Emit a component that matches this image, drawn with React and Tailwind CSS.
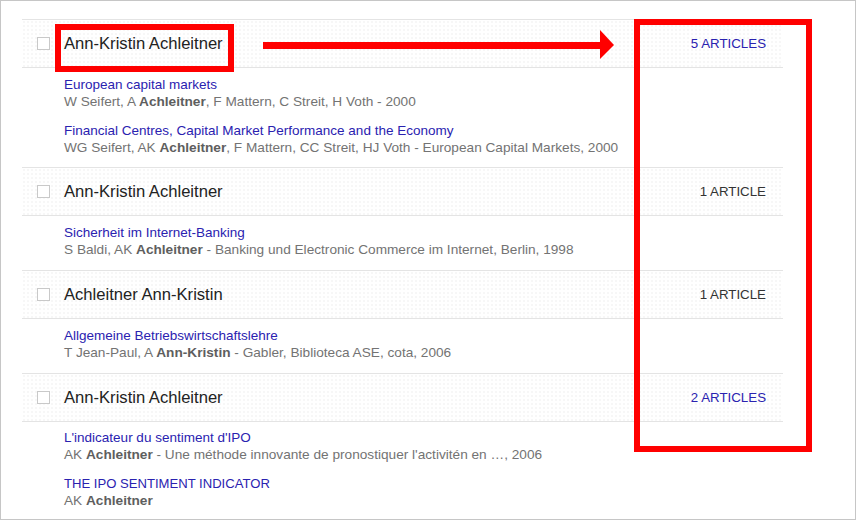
import React from "react";

const groups = [
  {
    name: "Ann-Kristin Achleitner",
    count: "5 ARTICLES",
    link: true,
    pt: "pt-[8px]",
    pb: "pb-[11px]",
    articles: [
      {
        title: "European capital markets",
        authors: [["W Seifert, A ", false], ["Achleitner", true], [", F Mattern, C Streit, H Voth - 2000", false]],
      },
      {
        title: "Financial Centres, Capital Market Performance and the Economy",
        authors: [["WG Seifert, AK ", false], ["Achleitner", true], [", F Mattern, CC Streit, HJ Voth - European Capital Markets, 2000", false]],
      },
    ],
  },
  {
    name: "Ann-Kristin Achleitner",
    count: "1 ARTICLE",
    link: false,
    pt: "pt-[8px]",
    pb: "pb-[12px]",
    articles: [
      {
        title: "Sicherheit im Internet-Banking",
        authors: [["S Baldi, AK ", false], ["Achleitner", true], [" - Banking und Electronic Commerce im Internet, Berlin, 1998", false]],
      },
    ],
  },
  {
    name: "Achleitner Ann-Kristin",
    count: "1 ARTICLE",
    link: false,
    pt: "pt-[8px]",
    pb: "pb-[12px]",
    articles: [
      {
        title: "Allgemeine Betriebswirtschaftslehre",
        authors: [["T Jean-Paul, A ", false], ["Ann-Kristin", true], [" - Gabler, Biblioteca ASE, cota, 2006", false]],
      },
    ],
  },
  {
    name: "Ann-Kristin Achleitner",
    count: "2 ARTICLES",
    link: true,
    pt: "pt-[7px]",
    pb: "pb-[12px]",
    articles: [
      {
        title: "L'indicateur du sentiment d'IPO",
        authors: [["AK ", false], ["Achleitner", true], [" - Une méthode innovante de pronostiquer l'activitén en …, 2006", false]],
      },
      {
        title: "THE IPO SENTIMENT INDICATOR",
        upper: true,
        authors: [["AK ", false], ["Achleitner", true]],
      },
    ],
  },
];

function Header({ name, count, link }) {
  return (
    <div className="h-[49px] border-t border-b border-[#e4e4e4] flex items-center bg-[radial-gradient(#ededed_0.6px,transparent_0.8px)] bg-size-[4px_4px]">
      <div className="ml-[15px] w-[13px] h-[13px] border border-[#c9c9c9] bg-white shrink-0 mt-[-1px]" />
      <div className="ml-[14px] text-[16.6px] leading-[20px] text-[#222222] mt-[1px]">{name}</div>
      <div className="flex-1" />
      <div className={"mr-[17px] text-[13.3px] leading-[17px] " + (link ? "text-[#2a22b0]" : "text-[#333333]")}>
        {count}
      </div>
    </div>
  );
}

export default function App() {
  return (
    <div className="relative w-[856px] h-[520px] border border-[#c6c6c6] bg-white overflow-hidden font-['Liberation_Sans',Arial,sans-serif]">
      <div className="ml-[21px] mt-[18px] w-[761px]">
        {groups.map((g, i) => (
          <div key={i}>
            <Header name={g.name} count={g.count} link={g.link} />
            <div className={"pl-[42px] flex flex-col gap-[12px] " + g.pt + " " + g.pb}>
              {g.articles.map((a, j) => (
                <div key={j} className="leading-[17px]">
                  <div className={(a.upper ? "text-[13.1px]" : "text-[13.5px]") + " text-[#2a22b0]"}>{a.title}</div>
                  <div className="text-[13.65px] text-[#737373]">
                    {a.authors.map(([t, b], k) =>
                      b ? (
                        <span key={k} className="font-bold text-[#5e5e5e]">{t}</span>
                      ) : (
                        <span key={k}>{t}</span>
                      )
                    )}
                  </div>
                </div>
              ))}
            </div>
          </div>
        ))}
      </div>

      {/* annotation: box around name */}
      <div className="absolute left-[54px] top-[23px] w-[179px] h-[48px] border-[6px] border-[#ff0000]" />
      {/* annotation: arrow */}
      <svg className="absolute left-[261px] top-[27px]" width="354" height="32" viewBox="0 0 354 32">
        <rect x="1" y="14" width="339" height="7" fill="#ff0000" />
        <polygon points="338,2 352,17 338,31" fill="#ff0000" />
      </svg>
      {/* annotation: big rectangle */}
      <div className="absolute left-[633px] top-[18px] w-[178px] h-[433px] border-[6px] border-[#ff0000]" />
    </div>
  );
}
